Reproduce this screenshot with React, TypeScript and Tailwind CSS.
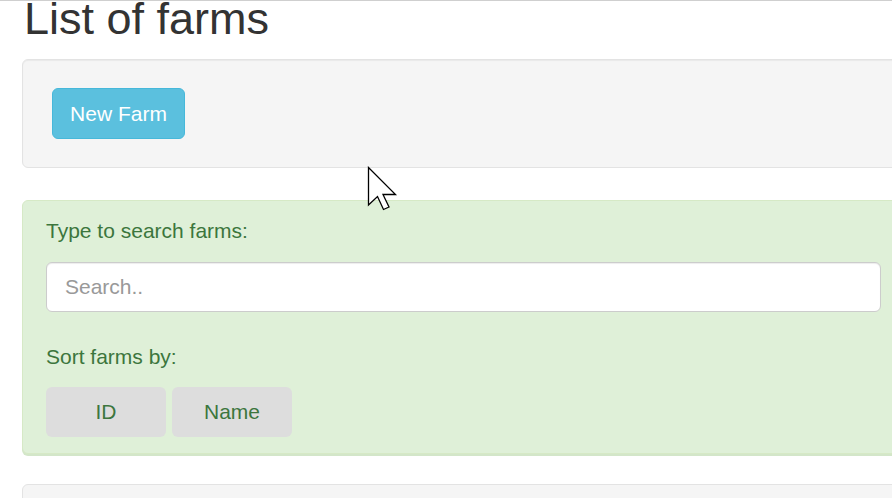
import React, { useState } from 'react';

const Cursor = () => (
  <svg
    className="absolute left-[367px] top-[166px] pointer-events-none"
    width="32"
    height="46"
    viewBox="0 0 32 46"
  >
    <polygon
      points="1.5,1.5 1.5,39 10.5,30.5 16.5,43.5 22,41 16,28.5 28.5,28.5"
      fill="#ffffff"
      stroke="#000000"
      strokeWidth="1.3"
      strokeLinejoin="miter"
    />
  </svg>
);

export default function App() {
  const [query, setQuery] = useState('');
  const [sortBy, setSortBy] = useState<'id' | 'name'>('id');

  return (
    <div
      className="relative w-[892px] h-[498px] overflow-hidden bg-white"
      style={{ fontFamily: '"Liberation Sans", Arial, Helvetica, sans-serif' }}
    >
      <div className="h-px bg-[#cfcfcf] relative z-10" />
      <div className="w-[927px] px-[22px]">
        <h2 className="-mt-[7px] mb-[15px] pl-[2px] text-[45px] leading-[50px] font-normal text-[#333333]">
          List of farms
        </h2>

        {/* toolbar well */}
        <div className="mb-[32px] rounded-[6px] border border-[#e3e3e3] bg-[#f5f5f5] py-[28px] px-[29px] shadow-[inset_0_1px_1px_rgba(0,0,0,0.05)]">
          <button className="h-[51px] w-[133px] rounded-[6px] border border-[#46b8da] bg-[#5bc0de] text-[21px] text-white">
            New Farm
          </button>
        </div>

        {/* search + sort */}
        <div className="rounded-[6px] border border-[#d6e9c6] bg-[#dff0d8] px-[23px] pt-[15px] pb-[16px] text-[#3c763d] shadow-[0_2px_0_#d3e6c9]">
          <label className="block text-[21px] leading-[30px]">Type to search farms:</label>
          <input
            value={query}
            onChange={(e) => setQuery(e.target.value)}
            placeholder="Search.."
            className="mt-[16px] block h-[50px] w-[835px] rounded-[6px] border border-[#cccccc] bg-white px-[18px] text-[21px] text-[#555] placeholder-[#999999] outline-none shadow-[inset_0_1px_1px_rgba(0,0,0,0.075)]"
          />
          <label className="mt-[30px] block text-[21px] leading-[30px]">Sort farms by:</label>
          <div className="mt-[15px] flex gap-[6px]">
            <button
              onClick={() => setSortBy('id')}
              className="h-[50px] w-[120px] rounded-[6px] bg-[#dddddd] text-[21px] text-[#3c763d]"
            >
              ID
            </button>
            <button
              onClick={() => setSortBy('name')}
              className="h-[50px] w-[120px] rounded-[6px] bg-[#dddddd] text-[21px] text-[#3c763d]"
            >
              Name
            </button>
          </div>
        </div>

        {/* list well (cut off) */}
        <div className="mt-[30px] h-[60px] rounded-[6px] border border-[#e3e3e3] bg-[#f5f5f5]" data-sort={sortBy} />
      </div>
      <Cursor />
    </div>
  );
}
